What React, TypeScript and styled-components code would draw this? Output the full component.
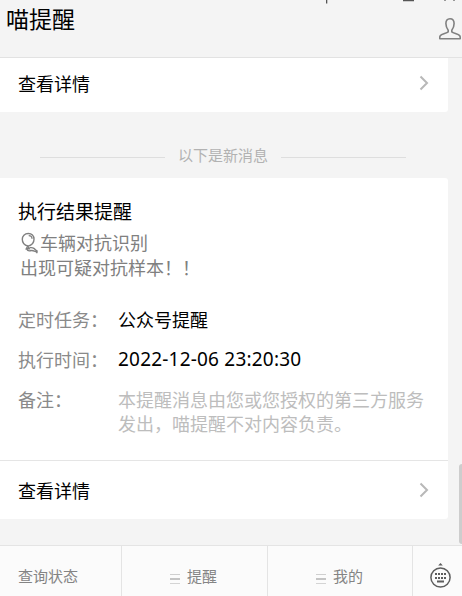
import React from 'react';
import styled, { createGlobalStyle } from 'styled-components';

const GlobalStyle = createGlobalStyle`
  * { box-sizing: border-box; }
  html, body { margin: 0; padding: 0; overflow: hidden; }
  body {
    background: #f4f4f4;
    font-family: "Noto Sans CJK SC", sans-serif;
    font-size: 18px;
    color: #000;
  }
`;

const Window = styled.div`
  position: relative;
  width: 462px;
  height: 596px;
  display: flex;
  flex-direction: column;
  overflow: hidden;
  background: #f4f4f4;
`;

const Header = styled.header`
  flex: none;
  height: 58px;
  display: flex;
  justify-content: space-between;
  padding: 2px 0 0 6px;
  border-bottom: 1px solid #e2e2e2;
`;

const ChatTitle = styled.h1`
  margin: 0;
  font-size: 23px;
  line-height: 32px;
  font-weight: 400;
`;

const ProfileIcon = styled.svg`
  width: 24px;
  height: 24px;
  margin-top: 15px;
`;

const WindowControls = styled.svg`
  position: absolute;
  top: 0;
  left: 320px;
  width: 142px;
  height: 5px;
`;

const Messages = styled.main`
  flex: none;
  height: 487px;
`;

const Card = styled.section<{ $continued?: boolean }>`
  width: 448px;
  background: #fff;
  border-radius: ${(p) => (p.$continued ? '0 0 3px 0' : '0 3px 3px 0')};
`;

const DetailLink = styled.div<{ $height: number; $divided?: boolean }>`
  display: flex;
  align-items: center;
  justify-content: space-between;
  height: ${(p) => p.$height}px;
  padding: 0 19px ${(p) => (p.$divided ? '0' : '4px')} 18px;
  border-top: ${(p) => (p.$divided ? '1px solid #e5e5e5' : 'none')};
  line-height: 24px;
`;

const Chevron = styled.svg`
  width: 10px;
  height: 16px;
`;

const NewMessages = styled.div`
  display: flex;
  align-items: center;
  justify-content: center;
  gap: 13px;
  width: 446px;
  height: 66px;
  padding-top: 20px;
  color: #b2b2b2;
  font-size: 15px;
  line-height: 22px;
`;

const Rule = styled.span`
  width: 125px;
  height: 1px;
  margin-top: 4px;
  background: #dedede;
`;

const Content = styled.div`
  height: 282px;
  padding: 19px 18px 0;
`;

const CardTitle = styled.h2`
  margin: 0;
  font-size: 19px;
  font-weight: 400;
  line-height: 27px;
`;

const Summary = styled.p`
  margin: 6px 0 0 2px;
  color: #808080;
  line-height: 25px;
`;

const SummaryLine = styled.span`
  display: flex;
  align-items: center;
  height: 25px;
`;

const Balloon = styled.svg`
  width: 20px;
  height: 22px;
`;

const Fields = styled.dl`
  display: grid;
  grid-template-columns: 100px 1fr;
  row-gap: 16px;
  margin: 27px -6px 0 0;
  line-height: 24px;
`;

const Label = styled.dt`
  color: #8a8a8a;
`;

const Value = styled.dd<{ $muted?: boolean; $numeric?: boolean }>`
  margin: 0;
  color: ${(p) => (p.$muted ? '#bdbdbd' : '#000')};
  ${(p) =>
    p.$numeric &&
    'padding-top: 1px; line-height: 23px; font-family: "Noto Sans", sans-serif; font-size: 19px; letter-spacing: 0.2px;'}
`;

const Menu = styled.nav`
  flex: none;
  display: grid;
  grid-template-columns: 122px 146px 145px 1fr;
  height: 51px;
  border-top: 1px solid #e4e4e4;
  background: #fbfbfb;
  color: #848484;
  font-size: 15px;
  line-height: 22px;
`;

const MenuItem = styled.div<{ $left: number }>`
  display: flex;
  align-items: center;
  gap: 7px;
  padding: 10px 0 0 ${(p) => p.$left}px;
  border-right: 1px solid #e4e4e4;
`;

const MenuLines = styled.svg`
  width: 10px;
  height: 10px;
  margin-top: 6px;
`;

const KeyboardCell = styled.div`
  padding: 16px 0 0 16px;
`;

const KeyboardIcon = styled.svg`
  display: block;
  width: 22px;
  height: 28px;
`;

const ScrollThumb = styled.div`
  position: absolute;
  top: 464px;
  right: -3px;
  width: 6px;
  height: 80px;
  border-radius: 3px;
  background: #cdcdcd;
`;

const Arrow = () => (
  <Chevron viewBox="0 0 10 16" fill="none" stroke="#b8b8b8" strokeWidth="2">
    <path d="M1.5 1.500 8 8l-6.500 6.500" />
  </Chevron>
);

const Lines = () => (
  <MenuLines viewBox="0 0 10 10">
    <path fill="#cfcfcf" d="M0 0h10v1H0z" />
    <path fill="#c4c4c4" d="M0 4h10v2H0z" />
    <path fill="#d4d4d4" d="M0 9h10v1H0z" />
  </MenuLines>
);

export default function App() {
  return (
    <Window lang="zh-CN">
      <GlobalStyle />
      <Header>
        <ChatTitle>喵提醒</ChatTitle>
        <ProfileIcon viewBox="0 0 24 24" fill="none" stroke="#808080" strokeWidth="1.6" strokeLinejoin="round">
          <path d="M10.200 13.200C8.600 11.200 7.900 9.500 7.900 6.600c0-3.200 1.300-4.900 4.100-4.900s4.100 1.700 4.100 4.900c0 2.900-.7 4.600-2.300 6.600v1.600c1.600 1.500 6.700 2.200 8 4 .6.800.5 2 .4 2.900H1.800c-.1-.9-.2-2.100.4-2.900 1.300-1.800 6.400-2.500 8-4z" />
        </ProfileIcon>
      </Header>
      <WindowControls viewBox="0 0 142 5" fill="#555">
        <path d="M6 0h1.300v3.500H6zM83 0h11v1.200H83z" />
        <path fill="#999" d="M124 0h2v1h-2zM133 0h2v1h-2z" />
      </WindowControls>

      <Messages>
        <Card $continued>
          <DetailLink $height={54}>
            查看详情
            <Arrow />
          </DetailLink>
        </Card>

        <NewMessages>
          <Rule />
          以下是新消息
          <Rule />
        </NewMessages>

        <Card>
          <Content>
            <CardTitle>执行结果提醒</CardTitle>
            <Summary>
              <SummaryLine>
                <Balloon viewBox="0 0 20 22" fill="none" stroke="#808080" strokeWidth="1.4">
                  <path d="M8.300 1.500C4.600 1.500 2.300 4 2.300 7.300c0 3.200 2.100 5.900 5.700 6.800 3.600-.9 6-3.600 6-6.900 0-3.300-2.200-5.700-5.700-5.700z" />
                  <path d="M8.700 3.600c2.100 0 3.300 1.200 3.300 3.100M7.800 14.200l-1.500 2.500h3z" />
                  <path d="M6.700 17c1.500 3.300 3.200 1.400 5.200 1.500 2.400.1 2.500 1.200 4.900 1.300v1.500" />
                  <path d="M9.500 15.500c2 .3 2.900-.2 4.400.8 1.300.9 1.600 1.900 2.900 2.300v2" />
                </Balloon>
                车辆对抗识别
              </SummaryLine>
              <SummaryLine>出现可疑对抗样本！！</SummaryLine>
            </Summary>
            <Fields>
              <Label>定时任务：</Label>
              <Value>公众号提醒</Value>
              <Label>执行时间：</Label>
              <Value $numeric>2022-12-06 23:20:30</Value>
              <Label>备注：</Label>
              <Value $muted>本提醒消息由您或您授权的第三方服务发出，喵提醒不对内容负责。</Value>
            </Fields>
          </Content>
          <DetailLink $height={59} $divided>
            查看详情
            <Arrow />
          </DetailLink>
        </Card>
      </Messages>

      <Menu>
        <MenuItem $left={18}>查询状态</MenuItem>
        <MenuItem $left={48}>
          <Lines />
          提醒
        </MenuItem>
        <MenuItem $left={48}>
          <Lines />
          我的
        </MenuItem>
        <KeyboardCell>
          <KeyboardIcon viewBox="0 0 22 28" fill="#5d5d5d">
            <path d="M11.500 1 13.800 3.500H9.200z" />
            <circle cx="11.500" cy="15.500" r="9.600" fill="none" stroke="#5d5d5d" strokeWidth="1.500" />
            <path d="M6 11h2v2H6zM9 11h2v2H9zM12 11h2v2h-2zM15 11h2v2h-2zM6 15h2v2H6zM9 15h2v2H9zM12 15h2v2h-2zM15 15h2v2h-2zM8 18.500h7v2H8z" />
          </KeyboardIcon>
        </KeyboardCell>
      </Menu>
      <ScrollThumb />
    </Window>
  );
}
